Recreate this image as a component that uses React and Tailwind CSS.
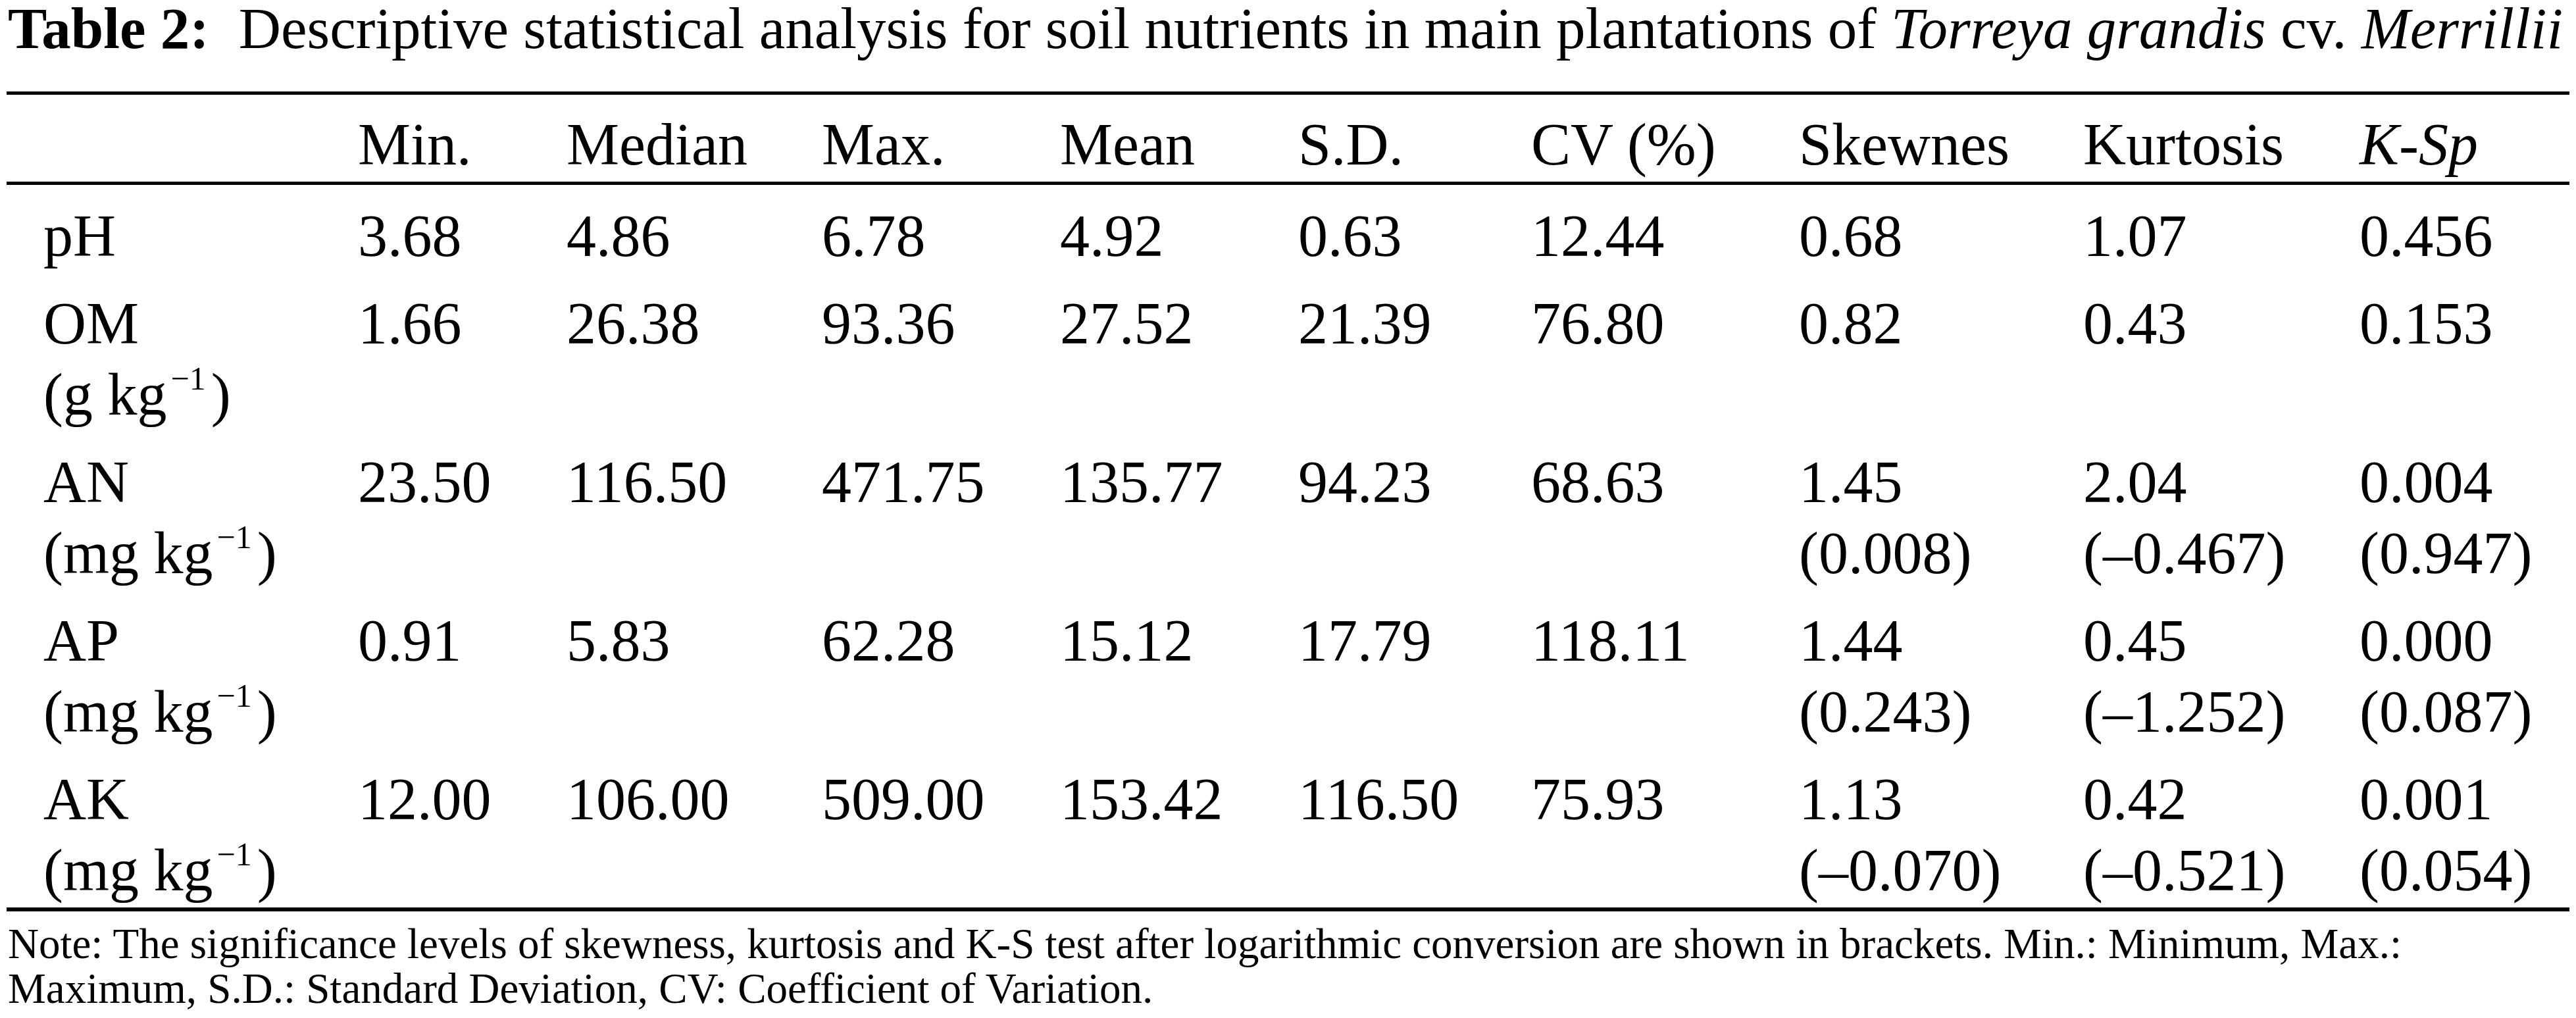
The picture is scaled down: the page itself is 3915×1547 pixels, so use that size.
import React from 'react'

const cols =
  'grid grid-cols-[534px_317px_388px_362px_362px_354px_407px_432px_420px_1fr]'

const rows = [
  { label: ['pH'], vals: [['3.68'], ['4.86'], ['6.78'], ['4.92'], ['0.63'], ['12.44'], ['0.68'], ['1.07'], ['0.456']] },
  { label: ['OM', 'g'], vals: [['1.66'], ['26.38'], ['93.36'], ['27.52'], ['21.39'], ['76.80'], ['0.82'], ['0.43'], ['0.153']] },
  { label: ['AN', 'mg'], vals: [['23.50'], ['116.50'], ['471.75'], ['135.77'], ['94.23'], ['68.63'], ['1.45', '(0.008)'], ['2.04', '(–0.467)'], ['0.004', '(0.947)']] },
  { label: ['AP', 'mg'], vals: [['0.91'], ['5.83'], ['62.28'], ['15.12'], ['17.79'], ['118.11'], ['1.44', '(0.243)'], ['0.45', '(–1.252)'], ['0.000', '(0.087)']] },
  { label: ['AK', 'mg'], vals: [['12.00'], ['106.00'], ['509.00'], ['153.42'], ['116.50'], ['75.93'], ['1.13', '(–0.070)'], ['0.42', '(–0.521)'], ['0.001', '(0.054)']] },
]

function Unit({ u }) {
  return (
    <div>
      ({u} kg<sup className="text-[50px] top-[-38px] ml-[6px] mr-[8px]">−1</sup>)
    </div>
  )
}

export default function App() {
  return (
    <div className="w-[3915px] h-[1547px] bg-white text-black font-['Liberation_Serif','Times_New_Roman',serif] overflow-hidden">
      {/* title */}
      <div className="pl-[12px] h-[139px] text-[89px] leading-[86px] whitespace-nowrap">
        <span className="font-bold">Table 2:</span>
        <span className="ml-[45px]">
          Descriptive statistical analysis for soil nutrients in main plantations of{' '}
          <i>Torreya grandis</i> cv. <i>Merrillii</i>
        </span>
      </div>

      <div className="mx-[10px] w-[3895px]">
        <div className="h-[5px] bg-black" />

        {/* header */}
        <div className={`${cols} text-[90px] leading-[108px] pt-[22px] pb-[2px]`}>
          <div />
          <div>Min.</div>
          <div>Median</div>
          <div>Max.</div>
          <div>Mean</div>
          <div>S.D.</div>
          <div>CV (%)</div>
          <div>Skewnes</div>
          <div>Kurtosis</div>
          <div className="italic">K-Sp</div>
        </div>

        <div className="h-[5px] bg-black" />

        {/* body */}
        <div className="flex flex-col gap-[25px] pt-[24px] pb-[2px] text-[90px] leading-[108px]">
          {rows.map((r) => (
            <div key={r.label[0]} className={cols}>
              <div className="pl-[56px]">
                <div>{r.label[0]}</div>
                {r.label[1] && <Unit u={r.label[1]} />}
              </div>
              {r.vals.map((v, i) => (
                <div key={i} className="whitespace-nowrap">
                  {v.map((t) => (
                    <div key={t}>{t}</div>
                  ))}
                </div>
              ))}
            </div>
          ))}
        </div>

        <div className="h-[6px] bg-black" />
      </div>

      {/* note */}
      <div className="pl-[12px] pt-[15px] text-[65px] leading-[68px] whitespace-nowrap">
        <div>
          Note: The significance levels of skewness, kurtosis and K-S test after logarithmic conversion are shown in brackets. Min.: Minimum, Max.:
        </div>
        <div>Maximum, S.D.: Standard Deviation, CV: Coefficient of Variation.</div>
      </div>
    </div>
  )
}
